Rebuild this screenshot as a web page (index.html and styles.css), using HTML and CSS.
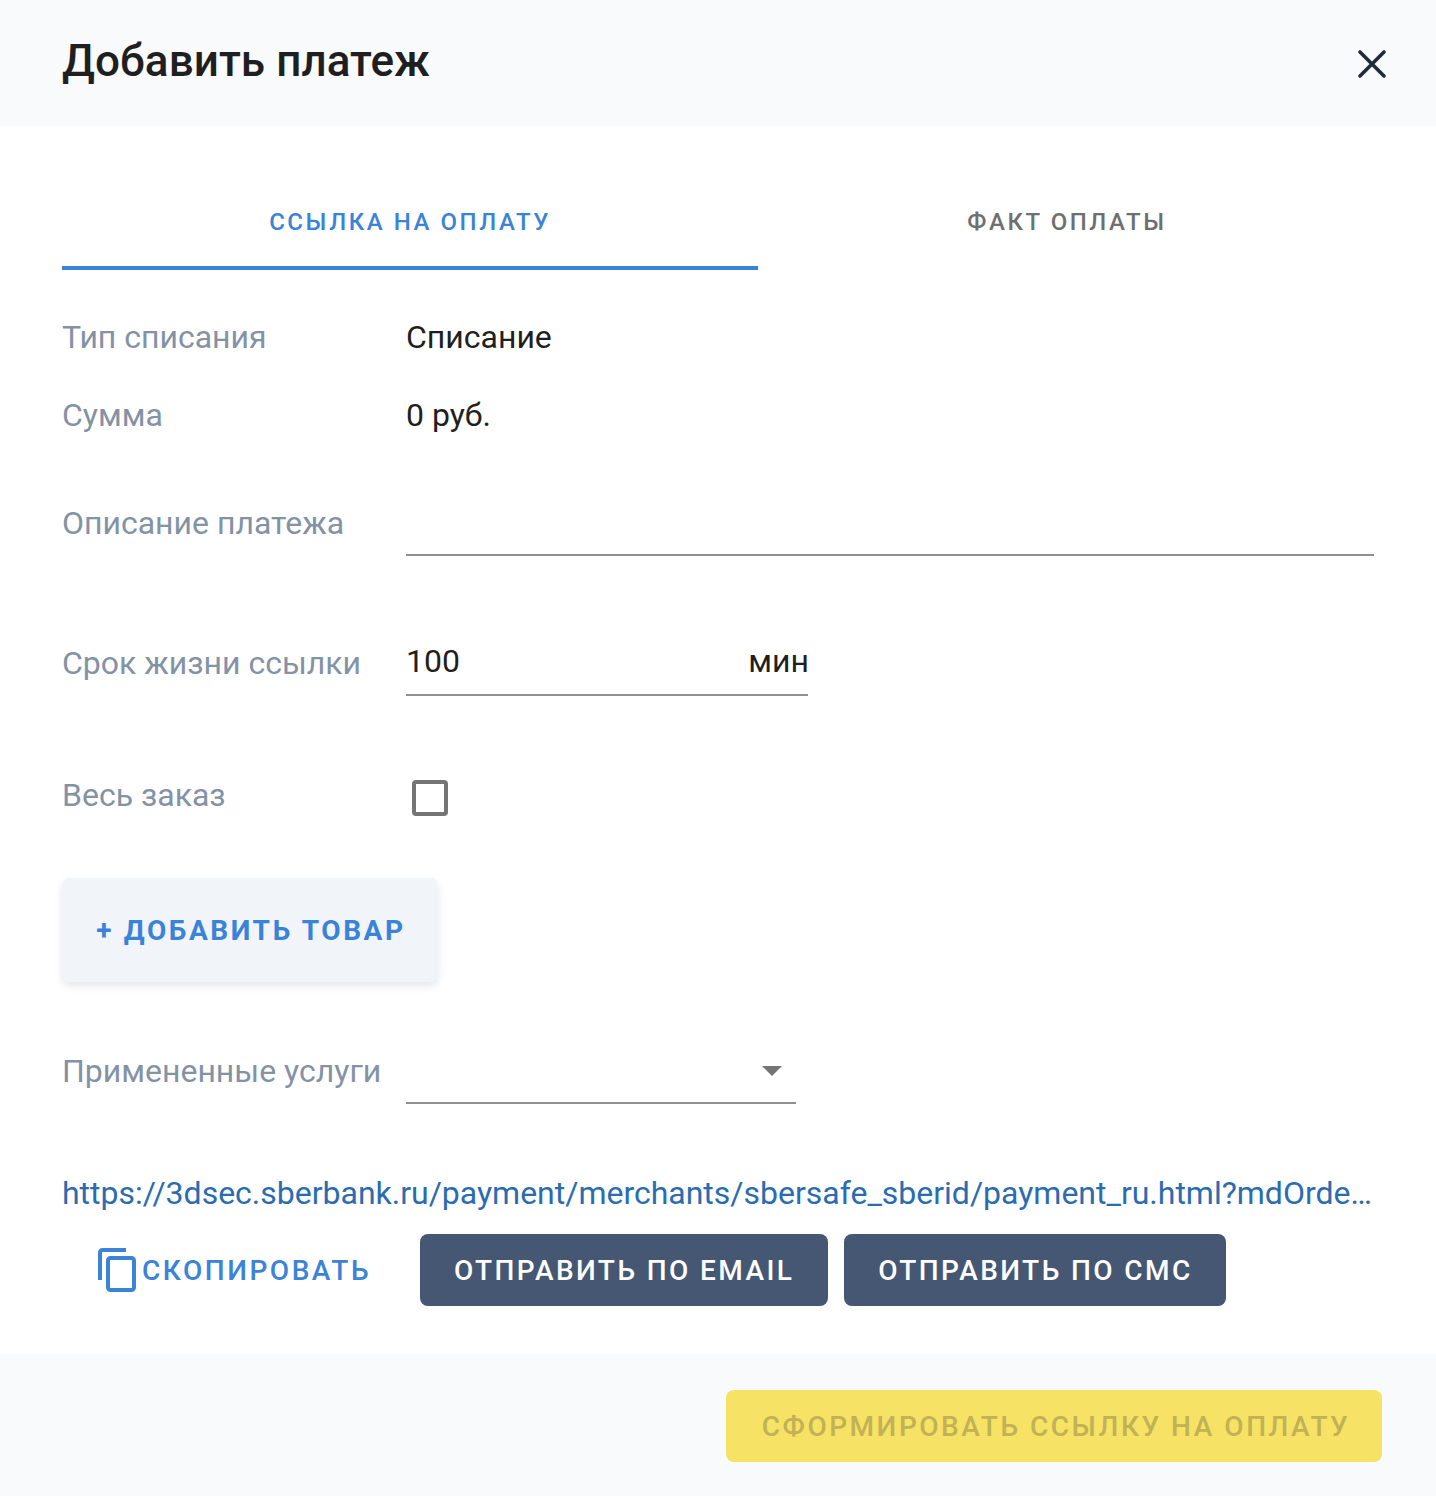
FILE: index.html
```html
<!DOCTYPE html>
<html lang="ru">
<head>
<meta charset="utf-8">
<title>Добавить платеж</title>
<link rel="stylesheet" href="styles.css">
</head>
<body>
<div class="dialog">
  <header class="head">
    <h1 class="title">Добавить платеж</h1>
    <button class="close" aria-label="Закрыть">
      <svg width="30" height="30" viewBox="0 0 30 30"><path d="M3 3L27 27M27 3L3 27" stroke="#222b38" stroke-width="3.6" stroke-linecap="round" fill="none"/></svg>
    </button>
  </header>
  <main class="body">
    <div class="tabs">
      <div class="tab tab-first tab-active">ССЫЛКА НА ОПЛАТУ</div>
      <div class="tab tab-second">ФАКТ ОПЛАТЫ</div>
    </div>
    <div class="row row-type"><span class="label">Тип списания</span><span class="value">Списание</span></div>
    <div class="row row-sum"><span class="label">Сумма</span><span class="value">0 руб.</span></div>
    <div class="row row-desc"><span class="label">Описание платежа</span><div class="field field-wide"></div></div>
    <div class="row row-life"><span class="label">Срок жизни ссылки</span><div class="field field-life"><span class="value">100</span><span class="unit">мин</span></div></div>
    <div class="row row-whole"><span class="label">Весь заказ</span><span class="check"></span></div>
    <button class="add">+ ДОБАВИТЬ ТОВАР</button>
    <div class="row row-serv"><span class="label">Примененные услуги</span><div class="field field-select"><span class="arrow"></span></div></div>
    <a class="link">https://3dsec.sberbank.ru/payment/merchants/sbersafe_sberid/payment_ru.html?mdOrde…</a>
    <div class="actions">
      <button class="copy">
        <svg width="38" height="44" viewBox="0 0 38 44"><path d="M28 2H4.500A2.500 2.500 0 0 0 2 4.500V32" fill="none" stroke="#3b82d9" stroke-width="4"/><rect x="10" y="10" width="26" height="32" rx="2.500" fill="none" stroke="#3b82d9" stroke-width="4"/></svg>
        <span>СКОПИРОВАТЬ</span>
      </button>
      <button class="send send-email">ОТПРАВИТЬ ПО EMAIL</button>
      <button class="send send-sms">ОТПРАВИТЬ ПО СМС</button>
    </div>
  </main>
  <footer class="foot">
    <button class="submit">СФОРМИРОВАТЬ ССЫЛКУ НА ОПЛАТУ</button>
  </footer>
</div>
</body>
</html>
```
FILE: styles.css
```css
* { box-sizing: border-box; }
html, body { margin: 0; padding: 0; background: #fff; }
body { font-family: Roboto, "Liberation Sans", sans-serif; }
button { font-family: inherit; border: 0; cursor: pointer; }
.dialog { width: 1436px; height: 1496px; display: flex; flex-direction: column; }
.head { height: 126px; background: #f9fafc; display: flex; align-items: center; justify-content: space-between; padding: 0 49px 0 62px; flex: none; }
.title { margin: 0 0 4px; font-size: 44px; font-weight: 500; line-height: 52px; letter-spacing: 0.07px; color: #1f1f1f; }
.close { width: 30px; height: 30px; padding: 0; background: none; display: flex; margin-top: 2px; }
.body { flex: 1; padding: 48px 62px 0; display: flex; flex-direction: column; align-items: flex-start; }
.tabs { display: flex; width: 1312px; height: 96px; }
.tab { display: flex; align-items: center; justify-content: center; font-size: 24px; font-weight: 500; letter-spacing: 2.56px; color: #6f6f6f; }
.tab-first { width: 696px; }
.tab-second { width: 616px; padding-left: 2px; }
.tab-active { color: #3b82d9; border-bottom: 4px solid #3b82d9; padding-top: 4px; }
.row { display: flex; align-items: flex-start; width: 1312px; }
.label { width: 344px; flex: none; font-size: 32px; line-height: 40px; color: #8492a6; }
.value { font-size: 32px; line-height: 40px; color: #1f1f1f; }
.unit { font-size: 32px; line-height: 40px; color: #1f1f1f; margin: 0 -1px 0 0; }
.row-type { margin-top: 47px; }
.row-sum { margin-top: 38px; }
.row-desc { margin-top: 59px; }
.row-desc .label { margin-top: 9px; }
.row-life { margin-top: 78px; }
.row-life .label { margin-top: 9px; }
.row-whole { margin-top: 79px; }
.field { height: 62px; border-bottom: 2px solid #8f8f8f; display: flex; align-items: center; }
.field-wide { width: 968px; }
.field-life { width: 402px; justify-content: space-between; padding-bottom: 6px; }
.field-select { width: 390px; justify-content: flex-end; padding: 0 14px 2px 0; }
.check { width: 36px; height: 36px; margin: 5px 0 0 6px; border: 4px solid #757575; border-radius: 4px; }
.add { margin-top: 62px; width: 376px; height: 104px; background: #f1f5f9; border-radius: 8px; font-size: 28px; font-weight: 700; letter-spacing: 2.6px; color: #3b82d9; box-shadow: 0 4px 8px rgba(0, 0, 0, .1); padding: 0 0 0 2px; }
.row-serv { margin-top: 60px; }
.row-serv .label { margin-top: 9px; }
.arrow { width: 0; height: 0; border-left: 10px solid transparent; border-right: 10px solid transparent; border-top: 10px solid #757575; }
.link { margin-top: 69px; font-size: 32px; line-height: 40px; letter-spacing: -0.01px; color: #2b6cb0; white-space: nowrap; }
.actions { margin-top: 21px; display: flex; align-items: center; }
.copy { margin-left: 36px; margin-right: 49px; padding: 0; background: none; display: flex; align-items: center; gap: 6px; font-size: 28px; font-weight: 500; letter-spacing: 2.52px; color: #3b82d9; }
.send { height: 72px; padding: 0 34px; background: #455772; color: #fff; border-radius: 8px; font-size: 28px; font-weight: 500; letter-spacing: 2.4px; }
.send-email { margin-right: 16px; }
.send-sms { padding-right: 33px; }
.foot { height: 142px; flex: none; background: #f9fafc; display: flex; justify-content: flex-end; padding: 36px 54px 0 0; }
.submit { width: 656px; height: 72px; background: #f6e265; color: #c2b155; border-radius: 8px; font-size: 28px; font-weight: 500; letter-spacing: 2.52px; padding: 0 0 0 4px; }
```
